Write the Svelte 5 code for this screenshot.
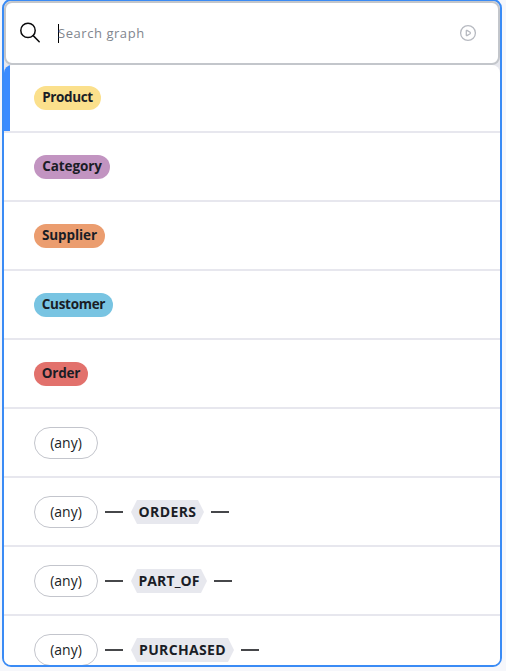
<script>
  const labels = [
    { name: 'Product', color: '#fbe08c', width: 67, spacing: -0.35 },
    { name: 'Category', color: '#c294c1', width: 76, spacing: -0.1 },
    { name: 'Supplier', color: '#eb9d6f', width: 71, spacing: -0.1 },
    { name: 'Customer', color: '#78c4e2', width: 79, spacing: -0.3 },
    { name: 'Order', color: '#e2716c', width: 54, spacing: -0.2 }
  ];
  const patterns = [
    { type: '' },
    { type: 'ORDERS', width: 73, spacing: 0.4 },
    { type: 'PART_OF', width: 76, spacing: 0.1 },
    { type: 'PURCHASED', width: 103, spacing: 0.35 }
  ];
</script>

<div class="page">
  <div class="panel">
    <div class="search">
      <svg class="lens" width="22" height="22" viewBox="0 0 22 22" fill="none" stroke="#0b0b0d" stroke-width="1.5">
        <circle cx="9" cy="8.4" r="7.2" />
        <path d="M14.2 13.6L20.2 19.7" stroke-linecap="round" />
      </svg>
      <span class="caret"></span>
      <span class="placeholder">Search graph</span>
      <svg class="play" width="18" height="18" viewBox="0 0 18 18" fill="none" stroke="#b7bac1" stroke-width="1.3">
        <circle cx="9" cy="9" r="7.4" />
        <path d="M7.3 6.8Q7.3 6.1 8 6.4L11.1 8.3Q11.8 9 11.1 9.7L8 11.6Q7.3 11.9 7.3 11.2Z" stroke-linejoin="round" />
      </svg>
    </div>
    <div class="list">
      {#each labels as l, i}
        <div class="row" class:selected={i === 0}>
          <span class="pill" style="background:{l.color};width:{l.width}px;letter-spacing:{l.spacing}px">{l.name}</span>
        </div>
      {/each}
      {#each patterns as p}
        <div class="row">
          <span class="any">(any)</span>
          {#if p.type}
            <span class="dash"></span>
            <span class="rel" style="width:{p.width}px;letter-spacing:{p.spacing}px">{p.type}</span>
            <span class="dash"></span>
          {/if}
        </div>
      {/each}
    </div>
  </div>
</div>

<style>
  :global(body) { background: #f6f7fb; overflow: hidden; }
  .page {
    box-sizing: border-box;
    width: 506px;
    height: 671px;
    padding: 0 4px 4px 2px;
    overflow: hidden;
    font-family: "Open Sans", "Noto Sans", sans-serif;
    font-size: 14px;
    color: #1a1d26;
  }
  .panel {
    box-sizing: border-box;
    width: 500px;
    height: 668px;
    margin-top: -1px;
    border: 2px solid #3a8bf5;
    border-radius: 9px;
    background: #e6e7ed;
    overflow: hidden;
  }
  .search {
    box-sizing: border-box;
    height: 64px;
    border: 2px solid #c3c6cb;
    border-radius: 8px;
    background: #fff;
    display: flex;
    align-items: center;
    padding: 0 21px 0 13px;
  }
  .caret { width: 1px; height: 19px; margin-left: 17px; background: #000; }
  .placeholder { color: #81858e; font-size: 13px; letter-spacing: 0.55px; margin-left: -1px; white-space: nowrap; }
  .play { margin-left: auto; }
  .list { border-radius: 8px 8px 0 0; overflow: hidden; }
  .row {
    box-sizing: border-box;
    height: 69px;
    border-bottom: 2px solid #e7e7ee;
    background: #fff;
    display: flex;
    align-items: center;
    padding: 1px 0 0 30px;
  }
  .row.selected {
    height: 68px;
    padding-top: 0;
    background: linear-gradient(90deg, #3a8bff 6px, #fff 6px);
  }
  .pill, .rel {
    height: 24px;
    line-height: 23px;
    text-align: center;
    font-weight: 700;
    white-space: nowrap;
  }
  .pill { border-radius: 12px; font-size: 13.5px; }
  .rel {
    background: #e7e8ee;
    clip-path: polygon(6px 0, calc(100% - 6px) 0, 100% 50%, calc(100% - 6px) 100%, 6px 100%, 0 50%);
  }
  .any {
    box-sizing: border-box;
    width: 64px;
    height: 32px;
    line-height: 29px;
    border: 1px solid #c3c5cc;
    border-radius: 16px;
    text-align: center;
  }
  .dash { width: 18px; height: 2px; margin: 0 8px 0 7px; background: #46474a; }
  .rel + .dash { margin-left: 7px; }
</style>
